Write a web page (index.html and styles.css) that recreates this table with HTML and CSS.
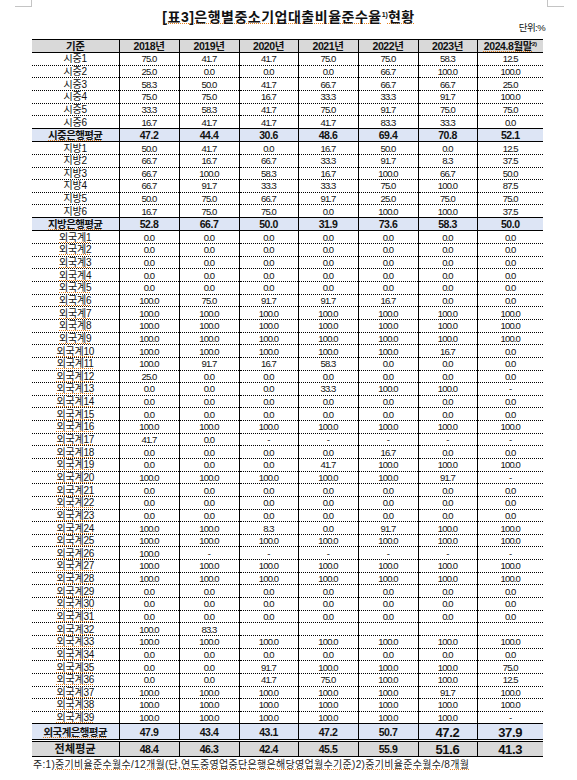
FILE: index.html
```html
<!DOCTYPE html>
<html lang="ko">
<head>
<meta charset="utf-8">
<title>[표3]은행별중소기업대출비율준수율 현황</title>
<link rel="stylesheet" href="styles.css">
</head>
<body>
<div class="page">
  <div class="mark mark-left"></div>
  <div class="mark mark-right"></div>
  <h1 class="title"><span class="sp">[표3]은행별중소기업대출비율준수율</span><sup class="sup">1)</sup><span class="sp">현황</span></h1>
  <div class="unit">단위:%</div>
  <table class="grid">
    <colgroup>
      <col class="c-label"><col class="c60"><col class="c60"><col class="c59"><col class="c60"><col class="c60"><col class="c59"><col class="c-last">
    </colgroup>
    <thead>
      <tr class="head"><th>기준</th><th>2018년</th><th>2019년</th><th>2020년</th><th>2021년</th><th>2022년</th><th>2023년</th><th><span class="sp">2024.8월말</span><sup class="sup2">2)</sup></th></tr>
    </thead>
    <tbody>
      <tr class="data"><td class="lb">시중1</td><td>75.0</td><td>41.7</td><td>41.7</td><td>75.0</td><td>75.0</td><td>58.3</td><td>12.5</td></tr>
      <tr class="data"><td class="lb">시중2</td><td>25.0</td><td>0.0</td><td>0.0</td><td>0.0</td><td>66.7</td><td>100.0</td><td>100.0</td></tr>
      <tr class="data"><td class="lb">시중3</td><td>58.3</td><td>50.0</td><td>41.7</td><td>66.7</td><td>66.7</td><td>66.7</td><td>25.0</td></tr>
      <tr class="data"><td class="lb">시중4</td><td>75.0</td><td>75.0</td><td>16.7</td><td>33.3</td><td>33.3</td><td>91.7</td><td>100.0</td></tr>
      <tr class="data"><td class="lb">시중5</td><td>33.3</td><td>58.3</td><td>41.7</td><td>75.0</td><td>91.7</td><td>75.0</td><td>75.0</td></tr>
      <tr class="data"><td class="lb">시중6</td><td>16.7</td><td>41.7</td><td>41.7</td><td>41.7</td><td>83.3</td><td>33.3</td><td>0.0</td></tr>
      <tr class="avg"><td class="lb"><span class="sp">시중은행평균</span></td><td>47.2</td><td>44.4</td><td>30.6</td><td>48.6</td><td>69.4</td><td>70.8</td><td>52.1</td></tr>
      <tr class="data"><td class="lb">지방1</td><td>50.0</td><td>41.7</td><td>0.0</td><td>16.7</td><td>50.0</td><td>0.0</td><td>12.5</td></tr>
      <tr class="data"><td class="lb">지방2</td><td>66.7</td><td>16.7</td><td>66.7</td><td>33.3</td><td>91.7</td><td>8.3</td><td>37.5</td></tr>
      <tr class="data"><td class="lb">지방3</td><td>66.7</td><td>100.0</td><td>58.3</td><td>16.7</td><td>100.0</td><td>66.7</td><td>50.0</td></tr>
      <tr class="data"><td class="lb">지방4</td><td>66.7</td><td>91.7</td><td>33.3</td><td>33.3</td><td>75.0</td><td>100.0</td><td>87.5</td></tr>
      <tr class="data"><td class="lb">지방5</td><td>50.0</td><td>75.0</td><td>66.7</td><td>91.7</td><td>25.0</td><td>75.0</td><td>75.0</td></tr>
      <tr class="data"><td class="lb">지방6</td><td>16.7</td><td>75.0</td><td>75.0</td><td>0.0</td><td>100.0</td><td>100.0</td><td>37.5</td></tr>
      <tr class="avg"><td class="lb"><span class="sp">지방은행평균</span></td><td>52.8</td><td>66.7</td><td>50.0</td><td>31.9</td><td>73.6</td><td>58.3</td><td>50.0</td></tr>
      <tr class="data"><td class="lb"><span class="sp">외국계1</span></td><td>0.0</td><td>0.0</td><td>0.0</td><td>0.0</td><td>0.0</td><td>0.0</td><td>0.0</td></tr>
      <tr class="data"><td class="lb"><span class="sp">외국계2</span></td><td>0.0</td><td>0.0</td><td>0.0</td><td>0.0</td><td>0.0</td><td>0.0</td><td>0.0</td></tr>
      <tr class="data"><td class="lb"><span class="sp">외국계3</span></td><td>0.0</td><td>0.0</td><td>0.0</td><td>0.0</td><td>0.0</td><td>0.0</td><td>0.0</td></tr>
      <tr class="data"><td class="lb"><span class="sp">외국계4</span></td><td>0.0</td><td>0.0</td><td>0.0</td><td>0.0</td><td>0.0</td><td>0.0</td><td>0.0</td></tr>
      <tr class="data"><td class="lb"><span class="sp">외국계5</span></td><td>0.0</td><td>0.0</td><td>0.0</td><td>0.0</td><td>0.0</td><td>0.0</td><td>0.0</td></tr>
      <tr class="data"><td class="lb"><span class="sp">외국계6</span></td><td>100.0</td><td>75.0</td><td>91.7</td><td>91.7</td><td>16.7</td><td>0.0</td><td>0.0</td></tr>
      <tr class="data"><td class="lb"><span class="sp">외국계7</span></td><td>100.0</td><td>100.0</td><td>100.0</td><td>100.0</td><td>100.0</td><td>100.0</td><td>100.0</td></tr>
      <tr class="data"><td class="lb"><span class="sp">외국계8</span></td><td>100.0</td><td>100.0</td><td>100.0</td><td>100.0</td><td>100.0</td><td>100.0</td><td>100.0</td></tr>
      <tr class="data"><td class="lb"><span class="sp">외국계9</span></td><td>100.0</td><td>100.0</td><td>100.0</td><td>100.0</td><td>100.0</td><td>100.0</td><td>100.0</td></tr>
      <tr class="data"><td class="lb"><span class="sp">외국계10</span></td><td>100.0</td><td>100.0</td><td>100.0</td><td>100.0</td><td>100.0</td><td>16.7</td><td>0.0</td></tr>
      <tr class="data"><td class="lb"><span class="sp">외국계11</span></td><td>100.0</td><td>91.7</td><td>16.7</td><td>58.3</td><td>0.0</td><td>0.0</td><td>0.0</td></tr>
      <tr class="data"><td class="lb"><span class="sp">외국계12</span></td><td>25.0</td><td>0.0</td><td>0.0</td><td>0.0</td><td>0.0</td><td>0.0</td><td>0.0</td></tr>
      <tr class="data"><td class="lb"><span class="sp">외국계13</span></td><td>0.0</td><td>0.0</td><td>0.0</td><td>33.3</td><td>100.0</td><td>100.0</td><td>-</td></tr>
      <tr class="data"><td class="lb"><span class="sp">외국계14</span></td><td>0.0</td><td>0.0</td><td>0.0</td><td>0.0</td><td>0.0</td><td>0.0</td><td>0.0</td></tr>
      <tr class="data"><td class="lb"><span class="sp">외국계15</span></td><td>0.0</td><td>0.0</td><td>0.0</td><td>0.0</td><td>0.0</td><td>0.0</td><td>0.0</td></tr>
      <tr class="data"><td class="lb"><span class="sp">외국계16</span></td><td>100.0</td><td>100.0</td><td>100.0</td><td>100.0</td><td>100.0</td><td>100.0</td><td>100.0</td></tr>
      <tr class="data"><td class="lb"><span class="sp">외국계17</span></td><td>41.7</td><td>0.0</td><td>-</td><td>-</td><td>-</td><td>-</td><td>-</td></tr>
      <tr class="data"><td class="lb"><span class="sp">외국계18</span></td><td>0.0</td><td>0.0</td><td>0.0</td><td>0.0</td><td>16.7</td><td>0.0</td><td>0.0</td></tr>
      <tr class="data"><td class="lb"><span class="sp">외국계19</span></td><td>0.0</td><td>0.0</td><td>0.0</td><td>41.7</td><td>100.0</td><td>100.0</td><td>100.0</td></tr>
      <tr class="data"><td class="lb"><span class="sp">외국계20</span></td><td>100.0</td><td>100.0</td><td>100.0</td><td>100.0</td><td>100.0</td><td>91.7</td><td>-</td></tr>
      <tr class="data"><td class="lb"><span class="sp">외국계21</span></td><td>0.0</td><td>0.0</td><td>0.0</td><td>0.0</td><td>0.0</td><td>0.0</td><td>0.0</td></tr>
      <tr class="data"><td class="lb"><span class="sp">외국계22</span></td><td>0.0</td><td>0.0</td><td>0.0</td><td>0.0</td><td>0.0</td><td>0.0</td><td>0.0</td></tr>
      <tr class="data"><td class="lb"><span class="sp">외국계23</span></td><td>0.0</td><td>0.0</td><td>0.0</td><td>0.0</td><td>0.0</td><td>0.0</td><td>0.0</td></tr>
      <tr class="data"><td class="lb"><span class="sp">외국계24</span></td><td>100.0</td><td>100.0</td><td>8.3</td><td>0.0</td><td>91.7</td><td>100.0</td><td>100.0</td></tr>
      <tr class="data"><td class="lb"><span class="sp">외국계25</span></td><td>100.0</td><td>100.0</td><td>100.0</td><td>100.0</td><td>100.0</td><td>100.0</td><td>100.0</td></tr>
      <tr class="data"><td class="lb"><span class="sp">외국계26</span></td><td>100.0</td><td>-</td><td>-</td><td>-</td><td>-</td><td>-</td><td>-</td></tr>
      <tr class="data"><td class="lb"><span class="sp">외국계27</span></td><td>100.0</td><td>100.0</td><td>100.0</td><td>100.0</td><td>100.0</td><td>100.0</td><td>100.0</td></tr>
      <tr class="data"><td class="lb"><span class="sp">외국계28</span></td><td>100.0</td><td>100.0</td><td>100.0</td><td>100.0</td><td>100.0</td><td>100.0</td><td>100.0</td></tr>
      <tr class="data"><td class="lb"><span class="sp">외국계29</span></td><td>0.0</td><td>0.0</td><td>0.0</td><td>0.0</td><td>0.0</td><td>0.0</td><td>0.0</td></tr>
      <tr class="data"><td class="lb"><span class="sp">외국계30</span></td><td>0.0</td><td>0.0</td><td>0.0</td><td>0.0</td><td>0.0</td><td>0.0</td><td>0.0</td></tr>
      <tr class="data"><td class="lb"><span class="sp">외국계31</span></td><td>0.0</td><td>0.0</td><td>0.0</td><td>0.0</td><td>0.0</td><td>0.0</td><td>0.0</td></tr>
      <tr class="data"><td class="lb"><span class="sp">외국계32</span></td><td>100.0</td><td>83.3</td><td></td><td></td><td></td><td></td><td></td></tr>
      <tr class="data"><td class="lb"><span class="sp">외국계33</span></td><td>100.0</td><td>100.0</td><td>100.0</td><td>100.0</td><td>100.0</td><td>100.0</td><td>100.0</td></tr>
      <tr class="data"><td class="lb"><span class="sp">외국계34</span></td><td>0.0</td><td>0.0</td><td>0.0</td><td>0.0</td><td>0.0</td><td>0.0</td><td>0.0</td></tr>
      <tr class="data"><td class="lb"><span class="sp">외국계35</span></td><td>0.0</td><td>0.0</td><td>91.7</td><td>100.0</td><td>100.0</td><td>100.0</td><td>75.0</td></tr>
      <tr class="data"><td class="lb"><span class="sp">외국계36</span></td><td>0.0</td><td>0.0</td><td>41.7</td><td>75.0</td><td>100.0</td><td>100.0</td><td>12.5</td></tr>
      <tr class="data"><td class="lb"><span class="sp">외국계37</span></td><td>100.0</td><td>100.0</td><td>100.0</td><td>100.0</td><td>100.0</td><td>91.7</td><td>100.0</td></tr>
      <tr class="data"><td class="lb"><span class="sp">외국계38</span></td><td>100.0</td><td>100.0</td><td>100.0</td><td>100.0</td><td>100.0</td><td>100.0</td><td>100.0</td></tr>
      <tr class="data"><td class="lb"><span class="sp">외국계39</span></td><td>100.0</td><td>100.0</td><td>100.0</td><td>100.0</td><td>100.0</td><td>100.0</td><td>-</td></tr>
      <tr class="avg avg-last"><td class="lb"><span class="sp">외국계은행평균</span></td><td>47.9</td><td>43.4</td><td>43.1</td><td>47.2</td><td>50.7</td><td class="big">47.2</td><td class="big">37.9</td></tr>
    </tbody>
    <tfoot>
      <tr class="total"><td class="lb">전체평균</td><td>48.4</td><td>46.3</td><td>42.4</td><td>45.5</td><td>55.9</td><td class="big">51.6</td><td class="big">41.3</td></tr>
    </tfoot>
  </table>
  <p class="note">주:1)<span class="sp">중기비율준수월수</span>/12<span class="sp">개월(단,연도중영업중단은행은해당영업월수기준)</span>2)<span class="sp">중기비율준수월수</span>/8<span class="sp">개월</span></p>
</div>
</body>
</html>
```
FILE: styles.css
```css
html, body {
  margin: 0;
  padding: 0;
  background: #ffffff;
}

.page {
  position: relative;
  width: 577px;
  height: 780px;
  font-family: "Liberation Sans", "Noto Sans CJK KR", sans-serif;
  color: #111;
  overflow: hidden;
}

.mark {
  position: absolute;
  top: 0;
  width: 16px;
  height: 6px;
  border-bottom: 1px solid #c4c4c4;
}
.mark-left {
  left: 15px;
  border-right: 1px solid #c4c4c4;
}
.mark-right {
  left: 547px;
  border-left: 1px solid #c4c4c4;
}

.title {
  margin: 10px 0 0;
  font-size: 14px;
  line-height: 14px;
  font-weight: bold;
  text-align: center;
  letter-spacing: 0.5px;
  color: #111;
}

.sp {
  text-decoration-line: underline;
  text-decoration-style: dotted;
  text-decoration-color: #e8801c;
  text-decoration-thickness: 1px;
  text-underline-offset: 1px;
}

.sup {
  font-size: 7px;
  line-height: 0;
  vertical-align: 5px;
  letter-spacing: 0;
}

.sup2 {
  font-size: 6px;
  line-height: 0;
  vertical-align: 4px;
  letter-spacing: -0.3px;
}

.unit {
  margin: -1px 0 0 32px;
  width: 513px;
  text-align: right;
  font-size: 9.5px;
  line-height: 10px;
  letter-spacing: -0.6px;
}

.grid {
  margin: 6px 0 0 32px;
  width: 511px;
  border-collapse: collapse;
  table-layout: fixed;
  border-top: 1px solid #000;
  border-bottom: 1px solid #000;
}

.c-label { width: 87px; }
.c60 { width: 60px; }
.c59 { width: 59px; }
.c-last { width: 66px; }

.grid th,
.grid td {
  padding: 0;
  border-left: 1px solid #000;
  text-align: center;
  vertical-align: middle;
  white-space: nowrap;
  overflow: hidden;
}
.grid th:first-child,
.grid td:first-child {
  border-left: none;
}

.head th {
  height: 12px;
  background: #d9d9d9;
  border-bottom: 1px solid #000;
  font-size: 10.5px;
  line-height: 11px;
  font-weight: bold;
  letter-spacing: -0.4px;
  color: #111;
}

.data td {
  height: 11.65px;
  font-size: 9.5px;
  line-height: 9px;
  letter-spacing: -0.9px;
  color: #111;
}
.data + .data td {
  border-top: 1px dotted #000;
}
.data td.lb {
  font-size: 10px;
  letter-spacing: -0.2px;
}

.avg td {
  height: 12.4px;
  background: #dde5f5;
  border-top: 1px solid #000;
  border-bottom: 1px solid #000;
  font-size: 10.5px;
  line-height: 10px;
  font-weight: bold;
  letter-spacing: -0.5px;
  color: #111;
}
.avg td.lb {
  font-size: 10.5px;
  letter-spacing: -0.6px;
}

.avg-last td {
  height: 12.2px;
}

.total td {
  height: 12.5px;
  background: #d9d9d9;
  border-top: 3px double #000;
  border-bottom: 1px solid #000;
  font-size: 10.5px;
  line-height: 10px;
  font-weight: bold;
  letter-spacing: -0.5px;
  color: #111;
}
.total td.lb {
  font-size: 11px;
  letter-spacing: 0.2px;
}

.grid td.big {
  font-size: 13px;
  letter-spacing: -0.3px;
  line-height: 10px;
  padding-top: 2px;
}

.note {
  margin: 2px 0 0 33px;
  font-size: 10px;
  line-height: 11px;
  letter-spacing: 0.3px;
  color: #222;
}
```
